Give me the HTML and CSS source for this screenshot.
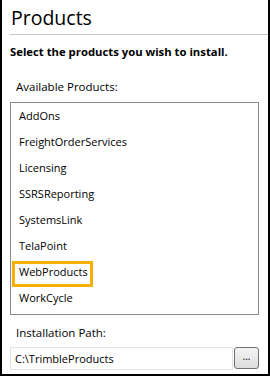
FILE: index.html
```html
<!DOCTYPE html>
<html lang="en">
  <head>
    <meta charset="UTF-8" />
    <meta name="viewport" content="width=device-width, initial-scale=1.0" />
    <title>Products</title>
    <link rel="stylesheet" href="styles.css">
  </head>
  <body>
    <div class="panel">
      <h1 class="panel-title">Products</h1>
      <p class="intro">Select the products you wish to install.</p>

      <!-- Lista de produtos -->
      <div class="field-label">Available Products:</div>
      <ul class="product-list">
        <li>AddOns</li>
        <li>FreightOrderServices</li>
        <li>Licensing</li>
        <li>SSRSReporting</li>
        <li>SystemsLink</li>
        <li>TelaPoint</li>
        <li><span class="highlight">WebProducts</span></li>
        <li>WorkCycle</li>
      </ul>

      <!-- Caminho de instalação -->
      <div class="field-label path-label">Installation Path:</div>
      <div class="path-row">
        <input class="path-input" type="text" value="C:\TrimbleProducts" />
        <button class="browse-btn" type="button">...</button>
      </div>
    </div>
  </body>
</html>
```

FILE: styles.css
```css
html,
body {
  margin: 0;
  padding: 0;
  background-color: #fff;
}

body {
  font-family: "Open Sans", "Noto Sans", Arial, sans-serif;
  color: #000;
  width: 270px;
  height: 376px;
  overflow: hidden;
}

.panel {
  box-sizing: border-box;
  width: 270px;
  height: 376px;
  border-left: 2px solid #000;
  border-right: 2px solid #000;
  border-bottom: 2px solid #000;
}

.panel-title {
  margin: 0 0 0 8px;
  padding: 5px 0 0 1px;
  height: 29px;
  font-size: 19.5px;
  font-weight: normal;
  line-height: 26px;
  border-bottom: 1px solid #c4c4c4;
}

.intro {
  margin: 9px 0 0 8px;
  font-size: 11.3px;
  font-weight: bold;
  line-height: 16px;
}

.field-label {
  margin: 19px 0 0 14px;
  font-size: 11.5px;
  line-height: 16px;
}

.product-list {
  list-style: none;
  margin: 7px 9px 0 8px;
  padding: 0 0 3px 0;
  height: 208px;
  border: 1px solid #8c8c8c;
}

.product-list li {
  height: 26px;
  line-height: 25px;
  padding-left: 8px;
  font-size: 11px;
}

.highlight {
  position: relative;
}

.highlight::after {
  content: "";
  position: absolute;
  left: -7px;
  right: -5px;
  top: -3px;
  bottom: -8px;
  border: 3px solid #f5b000;
}

.path-label {
  margin-top: 10px;
}

.path-row {
  display: flex;
  gap: 1px;
  margin: 6px 9px 0 8px;
}

.path-input {
  flex: 1;
  min-width: 0;
  height: 23px;
  box-sizing: border-box;
  margin: 0;
  padding: 0 4px;
  border: 1px solid #e3e3e3;
  font-family: inherit;
  font-size: 11px;
  color: #000;
}

.browse-btn {
  width: 25px;
  height: 22px;
  margin: 0;
  padding: 0 0 4px 0;
  border: 1px solid #707070;
  border-radius: 3px;
  background: linear-gradient(#f4f4f4, #dcdcdc);
  font-family: inherit;
  font-size: 10px;
  line-height: 10px;
  color: #000;
}
```
